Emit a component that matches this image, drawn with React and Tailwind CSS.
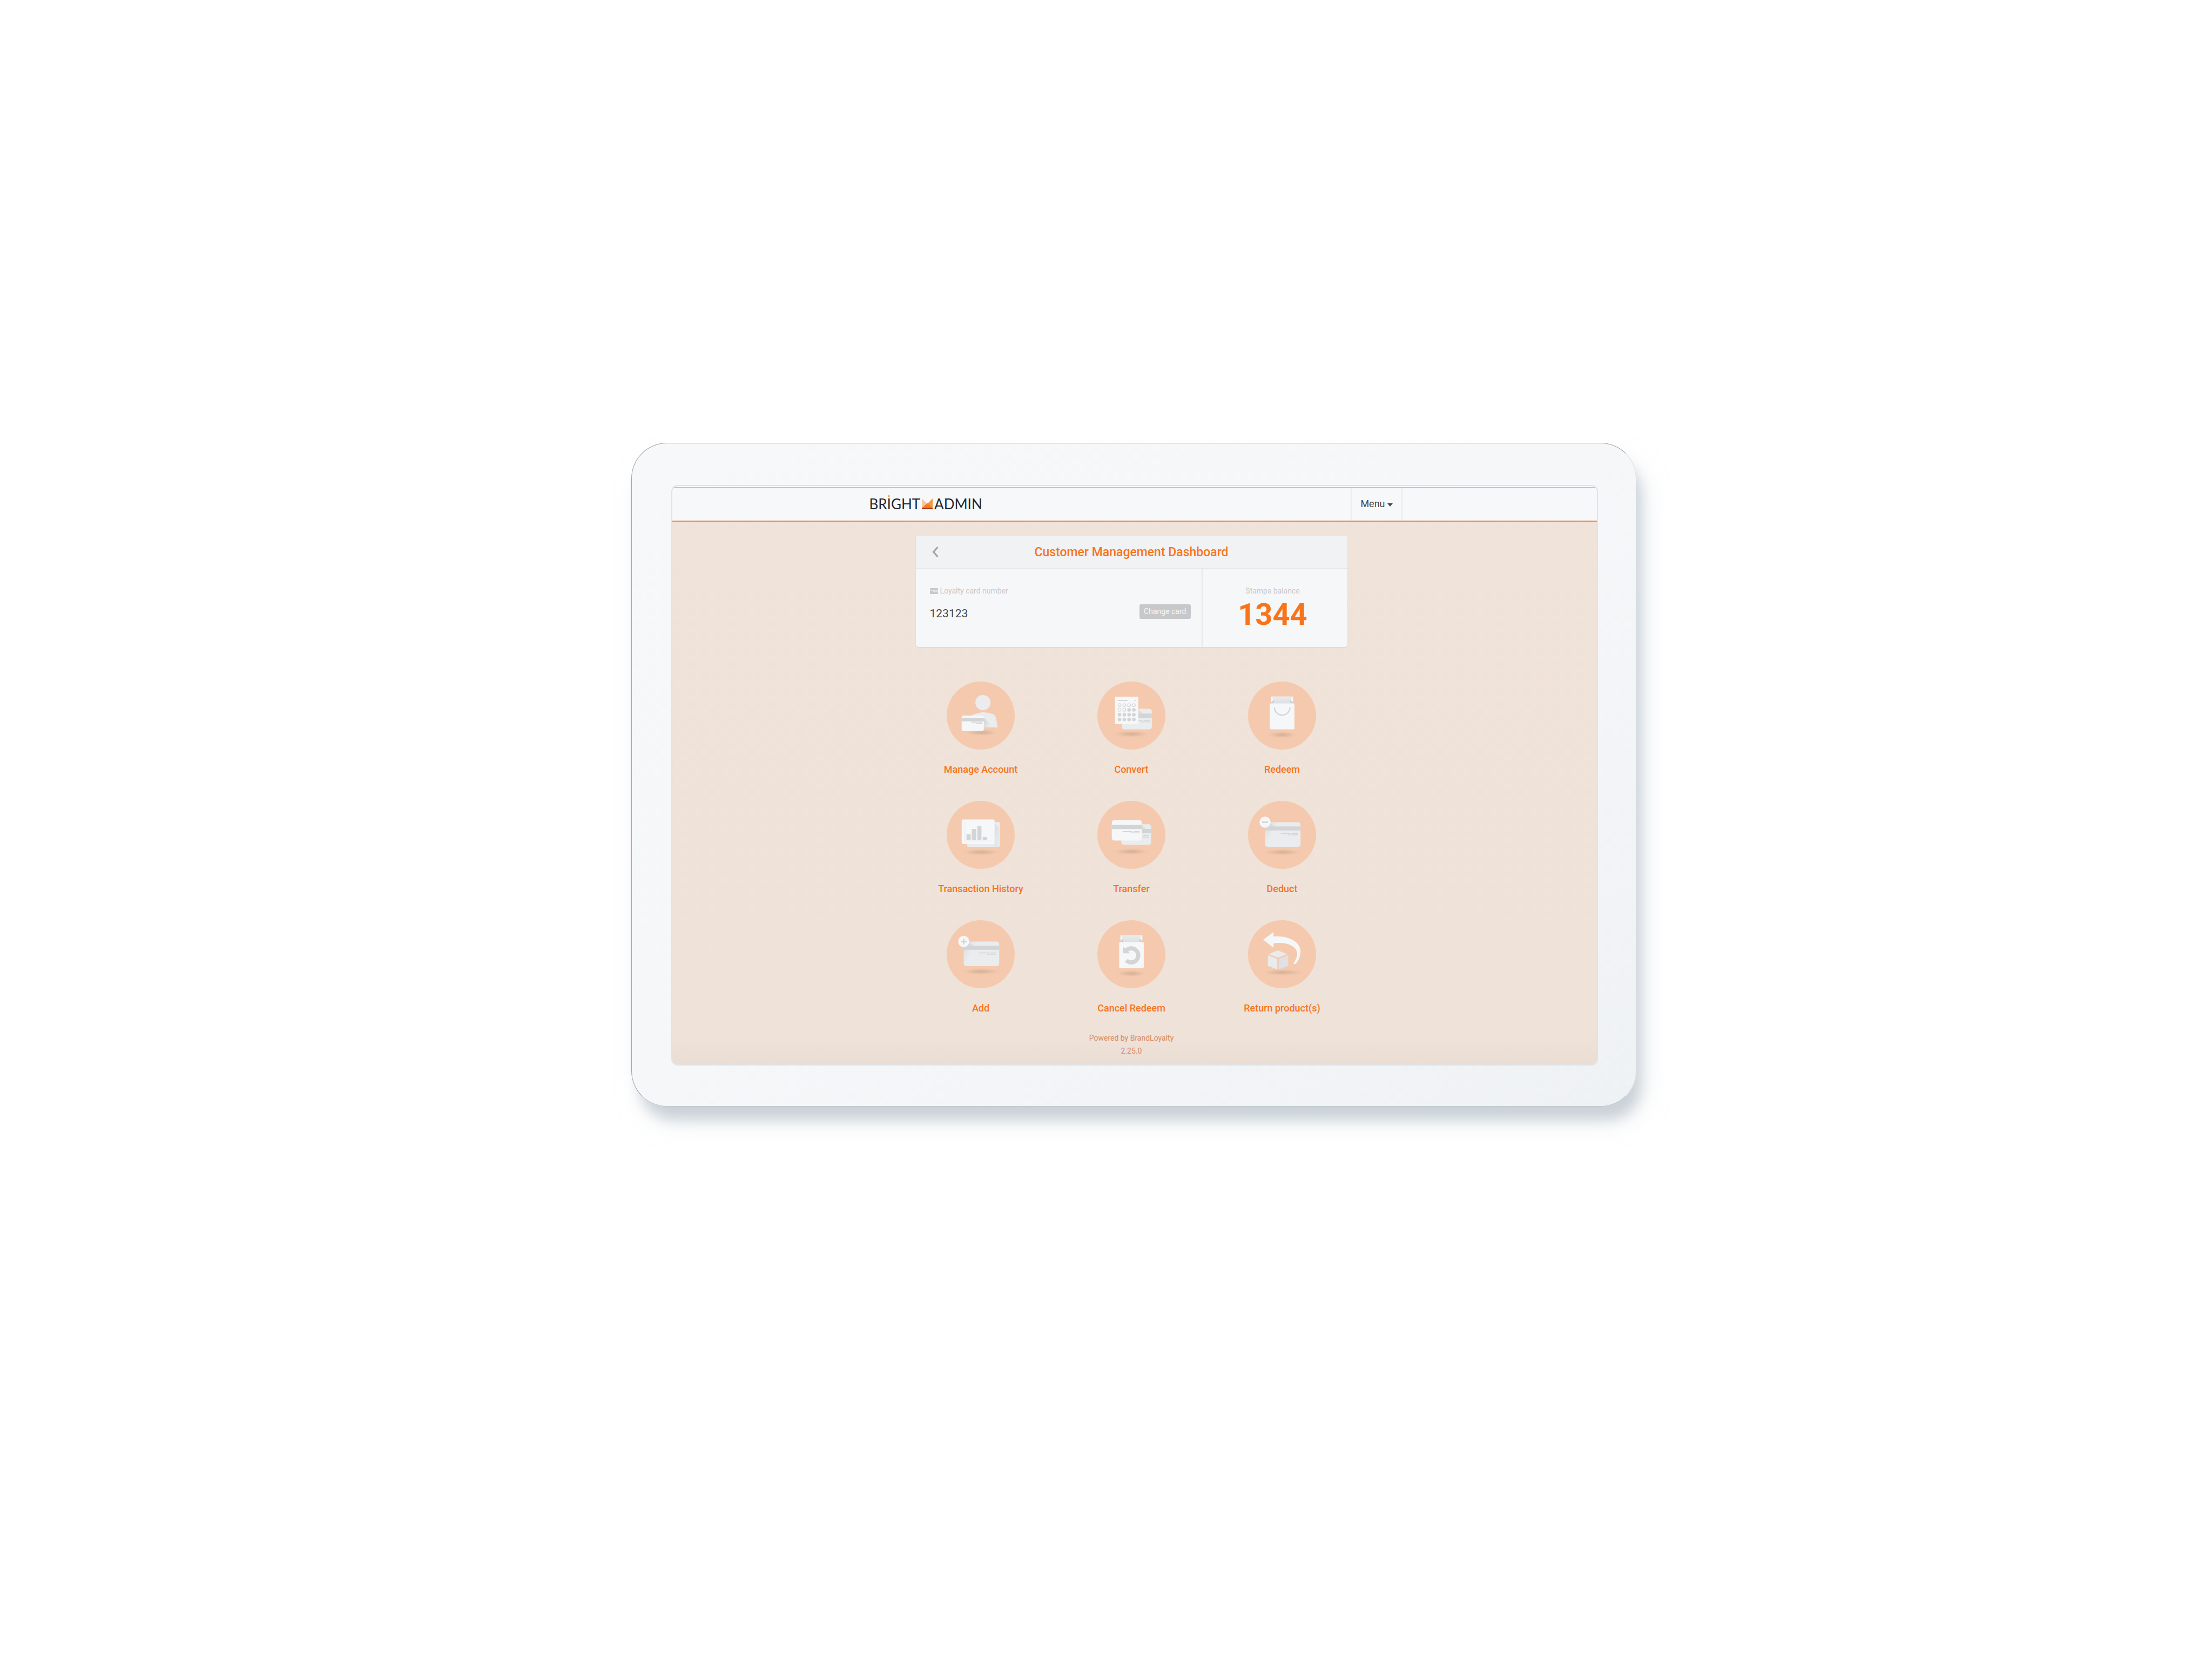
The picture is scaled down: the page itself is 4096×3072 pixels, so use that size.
import React from "react";

const WHITE = "#f6f7f9";
const PALE = "#eaecee";
const MID = "#d2d4d6";

function Defs() {
  return (
    <svg width="0" height="0" className="absolute" aria-hidden="true">
      <defs>
        <radialGradient id="floor">
          <stop offset="0" stopColor="#c9a78e" stopOpacity="0.75" />
          <stop offset="0.5" stopColor="#cfae95" stopOpacity="0.4" />
          <stop offset="1" stopColor="#f5c9ae" stopOpacity="0" />
        </radialGradient>
        <linearGradient id="fold" x1="0" y1="0" x2="1" y2="1">
          <stop offset="0" stopColor="#cfd2d5" />
          <stop offset="1" stopColor="#eaecee" />
        </linearGradient>
        <linearGradient id="fade" x1="0" y1="0" x2="1" y2="0.4">
          <stop offset="0" stopColor="#dadcdf" />
          <stop offset="0.35" stopColor="#eaecee" />
        </linearGradient>
        <linearGradient id="inside" x1="0" y1="0" x2="0" y2="1">
          <stop offset="0" stopColor="#eaecee" />
          <stop offset="1" stopColor="#dcdfe1" />
        </linearGradient>
      </defs>
    </svg>
  );
}

function Disc({ children, floor }) {
  const [cx, cy, rx] = floor;
  return (
    <svg viewBox="0 0 184 184" className="size-[126px]" aria-hidden="true">
      <circle cx="92" cy="92" r="92" fill="#f5c9ae" />
      <ellipse cx={cx} cy={cy} rx={rx} ry="10" fill="url(#floor)" />
      {children}
    </svg>
  );
}

function AccountIcon() {
  return (
    <Disc floor={[94, 138, 50]}>
      <circle cx="98" cy="57" r="20.5" fill={PALE} />
      <path d="M66 93Q70 88 98 83Q124 86 130 91Q133 93 138 124H66Z" fill={PALE} />
      <path d="M100 98L116 113V124H100Z" fill="url(#fold)" />
      <rect x="40.5" y="92" width="60" height="41.5" rx="5" fill={WHITE} />
      <rect x="40.5" y="99.3" width="60" height="8.4" fill={MID} />
      <path d="M66.6 110H83M84.6 110H96.5M79 114H96.5" stroke={MID} strokeWidth="2.2" />
    </Disc>
  );
}

function ConvertIcon() {
  const xs = [60, 73, 85.8, 98.7];
  const ys = [64, 76.7, 89.7, 102.7];
  return (
    <Disc floor={[92, 142, 54]}>
      <rect x="66" y="73.7" width="81.3" height="55.6" rx="7" fill="url(#fade)" />
      <path d="M110 75L122 87H110Z" fill={MID} opacity="0.7" />
      <rect x="106" y="86.7" width="41.3" height="11.3" fill={MID} />
      <path d="M110 105H121.7M125 105H142M116 109H142" stroke={MID} strokeWidth="2.2" />
      <rect x="47.8" y="41" width="62.8" height="74" fill={WHITE} />
      <path d="M55.5 51.2H81.5M100 51.2H103.5" stroke={MID} strokeWidth="2.4" />
      {ys.map((y, r) =>
        xs.map((x, c) => {
          const open = r === 0 || (r === 1 && c < 2);
          return (
            <circle
              key={`${r}-${c}`}
              cx={x}
              cy={y}
              r={open ? 4 : 4.8}
              fill={open ? "none" : MID}
              stroke={open ? MID : "none"}
              strokeWidth="1.7"
            />
          );
        })
      )}
    </Disc>
  );
}

function Bag() {
  return (
    <>
      <rect x="62.4" y="40.7" width="59.3" height="20" fill={WHITE} />
      <path d="M63.5 40.7H120.5L114 52V60H70V52Z" fill="url(#inside)" />
      <path d="M59.5 59.5L70 48.5V59.5ZM124.5 59.5L114 48.5V59.5Z" fill="#cfd2d4" />
      <rect x="59" y="59" width="66.5" height="70.3" rx="3" fill={WHITE} />
    </>
  );
}

function RedeemIcon() {
  return (
    <Disc floor={[92, 144, 44]}>
      <Bag />
      <path d="M71.5 70A20.8 20.8 0 0 0 113.2 70" fill="none" stroke={MID} strokeWidth="3.4" />
    </Disc>
  );
}

function CancelIcon() {
  return (
    <Disc floor={[92, 144, 44]}>
      <Bag />
      <path d="M78 108.5A19.1 19.1 0 1 0 78 81.5" fill="none" stroke={MID} strokeWidth="11" />
      <path d="M70 71.5V89.5H88Z" fill={MID} />
    </Disc>
  );
}

function HistoryIcon() {
  return (
    <Disc floor={[93, 138.7, 58]}>
      <rect x="55.5" y="57.3" width="88.5" height="67" rx="3" fill={PALE} />
      <path d="M129 60L142 74V124H129Z" fill="url(#fold)" opacity="0.6" />
      <rect x="40.6" y="50.3" width="88.8" height="66.4" rx="3" fill={WHITE} />
      <path d="M49.4 57.7V108.5H121.5" fill="none" stroke="#e7e9eb" strokeWidth="1.6" />
      <path d="M53.6 90.7H65V105.7H53.6ZM68 76H79.6V105.7H68ZM83 68.7H94V105.7H83ZM97.6 98H109V105.7H97.6Z" fill={MID} />
    </Disc>
  );
}

function TransferIcon() {
  return (
    <Disc floor={[92, 137, 54]}>
      <rect x="64.7" y="63.3" width="80.7" height="55.7" rx="7" fill="url(#fade)" />
      <path d="M119 64L131 76H119Z" fill={MID} opacity="0.6" />
      <rect x="100" y="76" width="45.4" height="11.3" fill={MID} />
      <path d="M123 94H140M110 97.7H140" stroke={MID} strokeWidth="2.2" />
      <rect x="39" y="52" width="81" height="55.3" rx="7" fill={WHITE} />
      <rect x="39" y="65" width="81" height="11.3" fill={MID} />
      <path d="M68 82.8H94M97.6 82.8H114.4M88.8 86.6H114.4" stroke={MID} strokeWidth="2.2" />
    </Disc>
  );
}

function BadgeCardIcon({ plus }) {
  return (
    <Disc floor={[93, 138.7, 58]}>
      <rect x="46" y="57.5" width="96" height="66.7" rx="7" fill="url(#fade)" />
      <path d="M58 58L72 70H50Z" fill={MID} opacity="0.7" />
      <rect x="46" y="69" width="96" height="11" fill={MID} />
      <path d="M88 88.2H114.4M118 88.2H134.3M108.7 92H134.3" stroke={MID} strokeWidth="2.2" />
      <circle cx="46" cy="57.5" r="15" fill={WHITE} />
      <path d={plus ? "M38 57.7H54M46 50V65.4" : "M38 57.7H54"} stroke={MID} strokeWidth="4" />
    </Disc>
  );
}

function ReturnIcon() {
  return (
    <Disc floor={[93, 141, 60]}>
      <path
        d="M41 52.7L69 31.7V44.3C112 40 142 60 142 84C142 99 135 112 128 118Q124 120 123 116C136 98 135 85 127 76C114 62 92 59.5 69 62.3V74.3Z"
        fill={WHITE}
      />
      <path d="M80.8 81.3L105.6 91.7L80.8 101L55.5 91.7Z" fill="#e9ebed" />
      <path d="M53.6 94.7L79.2 104.5V133L53.6 123.3Z" fill="#e9ebed" />
      <path d="M108.7 94.7L82.9 104.5V133L108.7 123.3Z" fill="#dfe1e4" />
    </Disc>
  );
}

const tiles = [
  ["Manage Account", <AccountIcon />],
  ["Convert", <ConvertIcon />],
  ["Redeem", <RedeemIcon />],
  ["Transaction History", <HistoryIcon />],
  ["Transfer", <TransferIcon />],
  ["Deduct", <BadgeCardIcon />],
  ["Add", <BadgeCardIcon plus />],
  ["Cancel Redeem", <CancelIcon />],
  ["Return product(s)", <ReturnIcon />],
];

function Logo() {
  return (
    <a href="#home" className="flex items-center pb-[2px] font-['Lato',sans-serif] text-[26px] leading-6 text-[#23262d]">
      <span>
        BR
        <span className="relative">
          I
          <span className="absolute top-0 left-1/2 size-[3px] -translate-x-1/2 rounded-full bg-[#f58220]" />
        </span>
        GHT
      </span>
      <svg viewBox="0 0 20 20" className="mx-[3px] size-5" aria-hidden="true">
        <path d="M0 0L10 10L0 20Z" fill="#f8c79c" />
        <path d="M20 0L10 10L20 20Z" fill="#f6983b" />
        <path d="M10 8.5L20 18V20H0V18Z" fill="#f47b29" />
        <path d="M0 17.5H20V20H0Z" fill="#a63a1c" />
      </svg>
      <span>ADMIN</span>
    </a>
  );
}

function Header() {
  return (
    <header className="border-t-2 border-b-2 border-t-[#c2c4c6] border-b-[#f0864a] bg-[#f6f8fa] pr-3">
      <div className="mx-auto flex h-[60px] w-full max-w-[1003px] items-stretch justify-between pl-4">
        <Logo />
        <button type="button" className="flex items-center gap-1 border-x-2 border-[#e9ebed] px-4 pb-[2px] text-lg text-[#45474a]">
          Menu
          <svg viewBox="0 0 10 6" className="mt-1 h-[6px] w-[10px]" aria-hidden="true">
            <path d="M0 0H10L5 6Z" fill="#45474a" />
          </svg>
        </button>
      </div>
    </header>
  );
}

function SummaryCard() {
  return (
    <section className="mx-auto w-full max-w-[799px] overflow-hidden rounded-[5px] bg-[#f6f7f9] shadow-[0_1px_2px_#d9d2cd]">
      <div className="grid h-[62px] grid-cols-[72px_1fr_72px] items-center border-b-2 border-[#e6e8ea] bg-[#f0f2f4]">
        <button type="button" aria-label="Back" className="flex justify-center">
          <svg viewBox="0 0 12 20" className="h-5 w-3" aria-hidden="true">
            <path d="M10.5 1L2.5 10L10.5 19" fill="none" stroke="#9fa1a4" strokeWidth="3" />
          </svg>
        </button>
        <h1 className="pt-[2px] text-center text-[23px] leading-7 font-medium text-[#f8741b]">Customer Management Dashboard</h1>
      </div>
      <div className="flex h-36">
        <div className="flex-1 pt-[30px] pr-5 pl-[26px]">
          <div className="flex items-center gap-1 text-sm text-[#c6c8ca]">
            <svg viewBox="0 0 15 11" className="h-[11px] w-[15px]" aria-hidden="true">
              <rect width="15" height="11" rx="1.5" fill="#c6c8ca" />
              <path d="M0 4H15M6 6.7H9.3M10.3 6.7H14" stroke="#f6f7f9" strokeWidth="1.1" />
            </svg>
            Loyalty card number
          </div>
          <div className="mt-[10px] flex items-center justify-between">
            <span className="pt-2 text-[21px] leading-7 text-[#45474a]">123123</span>
            <button type="button" className="h-[27px] rounded-[3px] bg-[#c6c8ca] px-2 text-sm text-[#f6f7f9]">
              Change card
            </button>
          </div>
        </div>
        <div className="w-[270px] border-l-2 border-[#e6e8ea] pt-[30px] pr-2 text-center">
          <div className="text-sm text-[#c6c8ca]">Stamps balance</div>
          <div className="mt-[6px] text-[56px] leading-[56px] font-bold text-[#f8741b]">1344</div>
        </div>
      </div>
    </section>
  );
}

export default function App() {
  return (
    <div className="min-h-screen bg-white pt-[820px] pr-[1066px] pb-[1022px] pl-[1169px] font-['Roboto',sans-serif]">
      <Defs />
      <div className="rounded-[66px] border border-t-[#a2a4a6] border-r-[#dde2e5] border-b-[#bcc5c8] border-l-[#a2a4a6] bg-linear-to-br from-[#f7f8fa] via-[#f5f7f9] to-[#eff2f4] pt-[77px] pr-[70px] pb-[75px] pl-[73px] shadow-[12px_28px_24px_-6px_#cad1d7,16px_30px_48px_-6px_#d0d7dd90]">
        <div className="overflow-hidden rounded-xl border-2 border-[#dfe3e4] bg-[#f6f8fa] pt-[2px]">
          <Header />
          <main className="bg-linear-to-b from-[#f0e3da] via-[#eee2d9] via-95% to-[#eaddd4] pt-[26px] pr-3 pb-[13px]">
            <SummaryCard />
            <nav className="mx-auto mt-16 grid w-full max-w-[837px] grid-cols-3 gap-y-[46px]">
              {tiles.map(([label, icon]) => (
                <a key={label} href="#tile" className="flex flex-col items-center gap-[25px]">
                  {icon}
                  <span className="text-lg leading-6 font-medium text-[#f8741b]">{label}</span>
                </a>
              ))}
            </nav>
            <footer className="mt-[31px] text-center text-sm leading-6 text-[#d98862]">
              <p>Powered by BrandLoyalty</p>
              <p>2.25.0</p>
            </footer>
          </main>
        </div>
      </div>
    </div>
  );
}
